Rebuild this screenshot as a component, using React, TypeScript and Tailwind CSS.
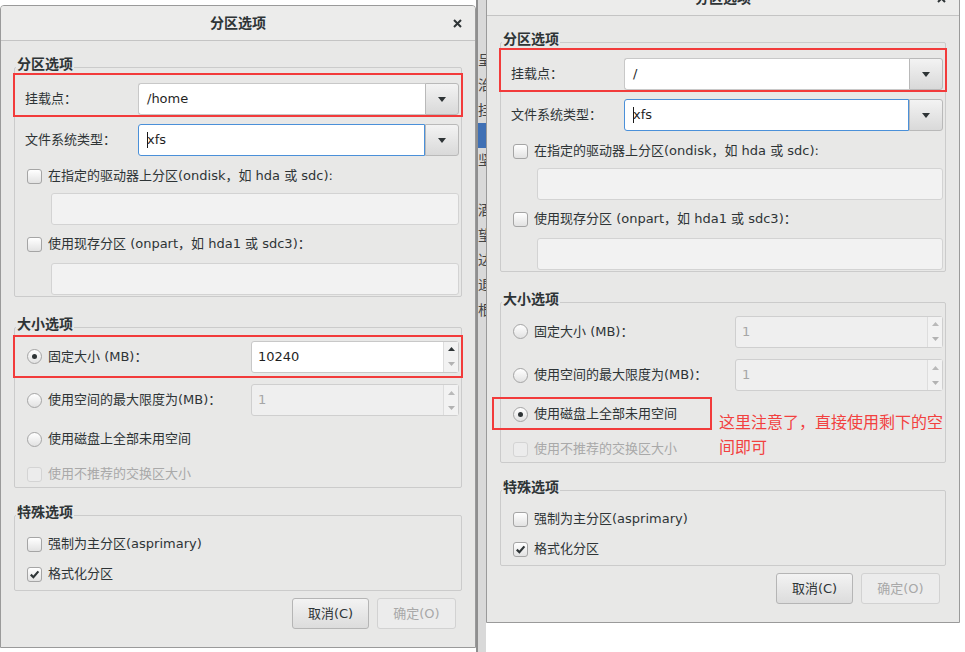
import React from 'react';

const TEXT = 'text-[#2e3436]';

const Checkbox = ({checked = false, disabled = false}: {checked?: boolean; disabled?: boolean}) => (
  <span
    className={`flex h-[15px] w-[15px] shrink-0 items-center justify-center rounded-[3px] border ${
      disabled ? 'border-[#d4d4d4] bg-[#ececec]' : 'border-[#a5a5a5] bg-linear-to-b from-white to-[#e2e2e2]'
    }`}
  >
    {checked && (
      <svg width="11" height="11" viewBox="0 0 11 11">
        <path d="M1.8 5.6 L4.4 8.2 L9.4 2.4" fill="none" stroke="#2e3436" strokeWidth="2.2" />
      </svg>
    )}
  </span>
);

const Radio = ({checked = false}: {checked?: boolean}) => (
  <span className="flex h-[15px] w-[15px] shrink-0 items-center justify-center rounded-full border border-[#a5a5a5] bg-linear-to-b from-white to-[#e2e2e2]">
    {checked && <span className="h-[5px] w-[5px] rounded-full bg-[#2e3436]" />}
  </span>
);

const Combo = ({value, focused = false}: {value: string; focused?: boolean}) => (
  <div className="flex h-[32px] flex-1">
    <div
      className={`flex flex-1 items-center rounded-l-[3px] border bg-white px-[8px] ${
        focused ? 'border-[#4a90d9]' : 'border-r-0 border-[#c8c8c8]'
      }`}
    >
      {focused && <span className="-mr-[1px] h-[16px] w-[1px] bg-[#1a1a1a]" />}
      <span className="text-[#1f1f1f]">{value}</span>
    </div>
    <div className="flex w-[34px] items-center justify-center rounded-r-[3px] border border-[#b9b9b9] bg-linear-to-b from-[#f3f3f3] to-[#d9d9d9]">
      <svg width="8" height="5" viewBox="0 0 8 5">
        <path d="M0 0h8L4 5z" fill="#2e3436" />
      </svg>
    </div>
  </div>
);

const Spin = ({value, disabled = false}: {value: string; disabled?: boolean}) => (
  <div
    className={`ml-auto flex h-[32px] w-[208px] rounded-[3px] border ${
      disabled ? 'border-[#cfcfcf] bg-[#efefef] text-[#a6a6a6]' : 'border-[#c8c8c8] bg-white text-[#1f1f1f]'
    }`}
  >
    <div className="flex flex-1 items-center px-[6px]">{value}</div>
    <div className="flex w-[15px] flex-col border-l border-[#dddddd] bg-[#f2f2f2]">
      <div className="flex flex-1 items-center justify-center">
        <svg width="7" height="4" viewBox="0 0 7 4">
          <path d="M0 4h7L3.5 0z" fill={disabled ? '#b9b9b9' : '#2e3436'} />
        </svg>
      </div>
      <div className="flex flex-1 items-center justify-center">
        <svg width="7" height="4" viewBox="0 0 7 4">
          <path d="M0 0h7L3.5 4z" fill="#b2b2b2" />
        </svg>
      </div>
    </div>
  </div>
);

const Group = ({title, className = '', children}: {title: string; className?: string; children: React.ReactNode}) => (
  <fieldset className={`min-w-0 rounded-[2px] border border-[#cbcbcb] pb-[1px] ${className}`}>
    <legend className={`ml-[1px] px-[1px] pb-[6px] text-[14px] leading-[16px] font-bold ${TEXT}`}>{title}</legend>
    {children}
  </fieldset>
);

type DialogProps = {
  mount: string;
  fixed: boolean;
  note?: boolean;
  className?: string;
};

const Dialog = ({mount, fixed, note = false, className = ''}: DialogProps) => (
  <div
    className={`flex h-[643px] shrink-0 flex-col overflow-hidden rounded-t-[4px] border border-[#9a9a9a] bg-[#e8e8e7] text-[13px] ${TEXT} ${className}`}
  >
    <div className="flex h-[35px] shrink-0 items-center border-b border-[#c4c4c4] bg-[#ececeb]">
      <div className="w-[36px]" />
      <div className="flex-1 text-center text-[14px] font-bold">分区选项</div>
      <div className="flex w-[36px] items-center justify-center">
        <svg width="9" height="9" viewBox="0 0 9 9">
          <path d="M1 1L8 8M8 1L1 8" stroke="#2e3436" strokeWidth="2" />
        </svg>
      </div>
    </div>

    <div className="flex flex-col px-[13px] pt-[15px]">
      <Group title="分区选项">
        <div className="-mt-[3px] flex items-center pt-[8px] pr-[2px] pl-[10px] outline-2 outline-[#f23b3b]">
          <span className="w-[113px] shrink-0">挂载点：</span>
          <Combo value={mount} />
        </div>
        <div className="mt-[9px] flex items-center pr-[2px] pl-[10px]">
          <span className="w-[113px] shrink-0">文件系统类型：</span>
          <Combo value="xfs" focused />
        </div>
        <div className="mt-[10px] flex h-[20px] items-center gap-[6px] pl-[12px]">
          <Checkbox />
          <span>在指定的驱动器上分区(ondisk，如 hda 或 sdc):</span>
        </div>
        <div className="mt-[7px] mr-[2px] ml-[36px] h-[32px] rounded-[3px] border border-[#d3d3d3] bg-[#f2f2f2]" />
        <div className="mt-[9px] flex h-[20px] items-center gap-[6px] pl-[12px]">
          <Checkbox />
          <span>使用现存分区 (onpart，如 hda1 或 sdc3)：</span>
        </div>
        <div className="mt-[9px] mr-[2px] ml-[36px] h-[32px] rounded-[3px] border border-[#d3d3d3] bg-[#f2f2f2]" />
      </Group>

      <Group title="大小选项" className="mt-[19px]">
        <div
          className={`-mt-[1px] flex h-[39px] items-center gap-[6px] pr-[2px] pl-[12px] ${
            fixed ? 'outline-2 outline-[#f23b3b]' : ''
          }`}
        >
          <Radio checked={fixed} />
          <span>固定大小 (MB)：</span>
          <Spin value={fixed ? '10240' : '1'} disabled={!fixed} />
        </div>
        <div className="mt-[8px] flex h-[32px] items-center gap-[6px] pr-[2px] pl-[12px]">
          <Radio />
          <span>使用空间的最大限度为(MB)：</span>
          <Spin value="1" disabled />
        </div>
        <div className="relative mt-[7px] flex h-[32px] items-center gap-[6px] pl-[12px]">
          <Radio checked={!fixed} />
          <span>使用磁盘上全部未用空间</span>
          {note && (
            <>
              <div className="pointer-events-none absolute -top-[1px] -left-[9px] h-[33px] w-[220px] border-2 border-[#f23b3b]" />
              <div className="absolute top-[11px] left-[218px] w-[232px] font-['Noto_Sans_CJK_SC',sans-serif] text-[16px] leading-[25px] text-[#f2413f]">
                这里注意了，直接使用剩下的空间即可
              </div>
            </>
          )}
        </div>
        <div className="mt-[7px] flex h-[24px] items-center gap-[6px] pl-[12px] text-[#a9a9a9]">
          <Checkbox disabled />
          <span>使用不推荐的交换区大小</span>
        </div>
      </Group>

      <Group title="特殊选项" className="mt-[16px]">
        <div className="mt-[3px] flex h-[30px] items-center gap-[6px] pl-[12px]">
          <Checkbox />
          <span>强制为主分区(asprimary)</span>
        </div>
        <div className="flex h-[30px] items-center gap-[6px] pl-[12px]">
          <Checkbox checked />
          <span>格式化分区</span>
        </div>
      </Group>

      <div className="mt-[7px] flex justify-end gap-[8px] pr-[6px]">
        <button className="h-[31px] w-[77px] rounded-[3px] border border-[#b5b5b5] bg-linear-to-b from-[#f3f3f3] to-[#dcdcdc] text-[13px]">
          取消(C)
        </button>
        <button className="h-[31px] w-[79px] rounded-[3px] border border-[#d2d2d2] bg-[#ececec] text-[13px] text-[#a8a8a8]">
          确定(O)
        </button>
      </div>
    </div>
  </div>
);

const strip = ['呈', '治', '挂', '', '坚', '', '酒', '望', '达', '退', '根'];

export default function App() {
  return (
    <div className="flex h-[652px] w-[965px] items-start overflow-hidden bg-white font-['DejaVu_Sans','Noto_Sans_CJK_SC',sans-serif]">
      <Dialog mount="/home" fixed className="mt-[5px] w-[476px]" />
      <div className="flex h-full w-[10px] shrink-0 flex-col overflow-hidden border-l-2 border-[#8f8f8f] bg-[#d9d9d9] pt-[48px] text-[14px] leading-[25px] text-[#444]">
        {strip.map((c, i) =>
          i === 3 ? (
            <div key={i} className="h-[25px] bg-[#3f70b5]" />
          ) : (
            <div key={i} className="h-[25px] whitespace-nowrap">
              {c}
            </div>
          ),
        )}
      </div>
      <Dialog mount="/" fixed={false} note className="-mt-[20px] w-[474px]" />
    </div>
  );
}
